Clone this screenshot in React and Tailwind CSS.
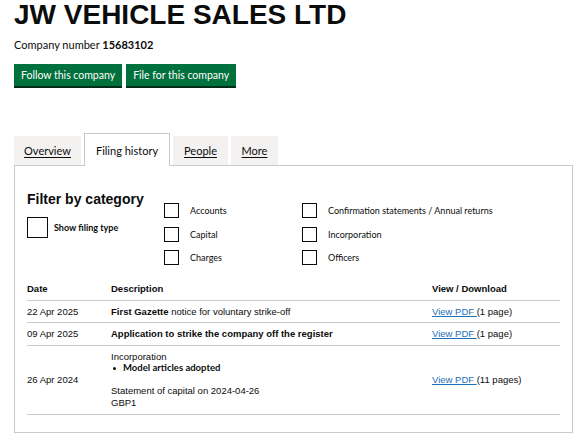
import React from 'react';

const arial = { fontFamily: '"Liberation Sans", Arial, sans-serif' };

function Box({ big }) {
  return (
    <span
      className={
        big
          ? 'block h-[21px] w-[21px] shrink-0 border border-[#0b0c0c] bg-white'
          : 'block h-[15px] w-[15px] shrink-0 border border-[#0b0c0c] bg-white'
      }
    />
  );
}

function CheckItem({ label }) {
  return (
    <label className="flex h-[15px] items-center">
      <Box />
      <span className="ml-[11px] text-[9px] leading-[11px] text-[#0b0c0c]">{label}</span>
    </label>
  );
}

const filings = [
  {
    date: '22 Apr 2025',
    desc: (
      <span>
        <b>First Gazette</b> notice for voluntary strike-off
      </span>
    ),
    pages: '(1 page)',
  },
  {
    date: '09 Apr 2025',
    desc: <b>Application to strike the company off the register</b>,
    pages: '(1 page)',
  },
  {
    date: '26 Apr 2024',
    desc: (
      <div className="leading-[11.5px]">
        <div>Incorporation</div>
        <ul className="mb-[11.5px] flex items-center">
          <li className="flex items-center">
            <span className="ml-[2px] mr-[7px] inline-block h-[3px] w-[3px] rounded-full bg-[#0b0c0c]" />
            <b className="font-['Lato']">Model articles adopted</b>
          </li>
        </ul>
        <div>Statement of capital on 2024-04-26</div>
        <div>GBP1</div>
      </div>
    ),
    pages: '(11 pages)',
  },
];

export default function App() {
  return (
    <div className="min-h-[437px] bg-white pl-[14px] pr-[3px] text-[#0b0c0c]" style={{ fontFamily: 'Lato, "Noto Sans", sans-serif' }}>
      <h1 className="text-[28px] font-bold leading-[30px]" style={arial}>
        JW VEHICLE SALES LTD
      </h1>
      <p className="mt-[8px] text-[11px] leading-[14px]">
        Company number <b>15683102</b>
      </p>

      <div className="mt-[12px] flex gap-[4px]">
        <button className="h-[22px] bg-[#00703c] px-[7px] text-[10.5px] leading-[22px] text-white shadow-[0_2px_0_#002d18]">
          Follow this company
        </button>
        <button className="h-[22px] bg-[#00703c] px-[7px] text-[10.5px] leading-[22px] text-white shadow-[0_2px_0_#002d18]">
          File for this company
        </button>
      </div>

      <ul className="mt-[47px] flex items-end gap-[3px] text-[11px] leading-[14px]">
        <li className="flex h-[29px] w-[67px] items-center justify-center bg-[#f3f2f1] underline underline-offset-2">Overview</li>
        <li className="relative z-10 -mb-px flex h-[33px] w-[86px] items-center justify-center border border-b-0 border-[#c9cacb] bg-white pt-[2px]">
          Filing history
        </li>
        <li className="flex h-[29px] w-[55px] items-center justify-center bg-[#f3f2f1] underline underline-offset-2">People</li>
        <li className="flex h-[29px] w-[47px] items-center justify-center bg-[#f3f2f1] underline underline-offset-2">More</li>
      </ul>

      <section className="border border-[#c9cacb] pb-[17px] pl-[12px] pr-[12px] pt-[25px]">
        <div className="flex">
          <div className="w-[137px]">
            <h2 className="text-[14px] font-bold leading-[16px]" style={arial}>
              Filter by category
            </h2>
            <label className="mt-[10px] flex items-center">
              <Box big />
              <span className="-mt-[1px] ml-[6px] text-[9px] font-bold leading-[11px]">Show filing type</span>
            </label>
          </div>
          <div className="mt-[12px] flex w-[138px] flex-col gap-[8.5px]">
            <CheckItem label="Accounts" />
            <CheckItem label="Capital" />
            <CheckItem label="Charges" />
          </div>
          <div className="mt-[12px] flex flex-col gap-[8.5px]">
            <CheckItem label="Confirmation statements / Annual returns" />
            <CheckItem label="Incorporation" />
            <CheckItem label="Officers" />
          </div>
        </div>

        <table className="mt-[13px] w-full border-collapse text-left text-[9.5px] leading-[11px]" style={arial}>
          <thead>
            <tr className="border-b border-[#c9cacb]">
              <th className="w-[84px] py-[5.25px] font-bold">Date</th>
              <th className="w-[321px] py-[5.25px] font-bold">Description</th>
              <th className="py-[5.25px] font-bold">View / Download</th>
            </tr>
          </thead>
          <tbody>
            {filings.map((f) => (
              <tr key={f.date} className="border-b border-[#c9cacb] align-middle">
                <td className="py-[5.25px]">{f.date}</td>
                <td className="py-[5.25px]">{f.desc}</td>
                <td className="py-[5.25px]">
                  <a className="text-[#1d70b8] underline">View PDF </a>
                  {f.pages}
                </td>
              </tr>
            ))}
          </tbody>
        </table>
      </section>
    </div>
  );
}
